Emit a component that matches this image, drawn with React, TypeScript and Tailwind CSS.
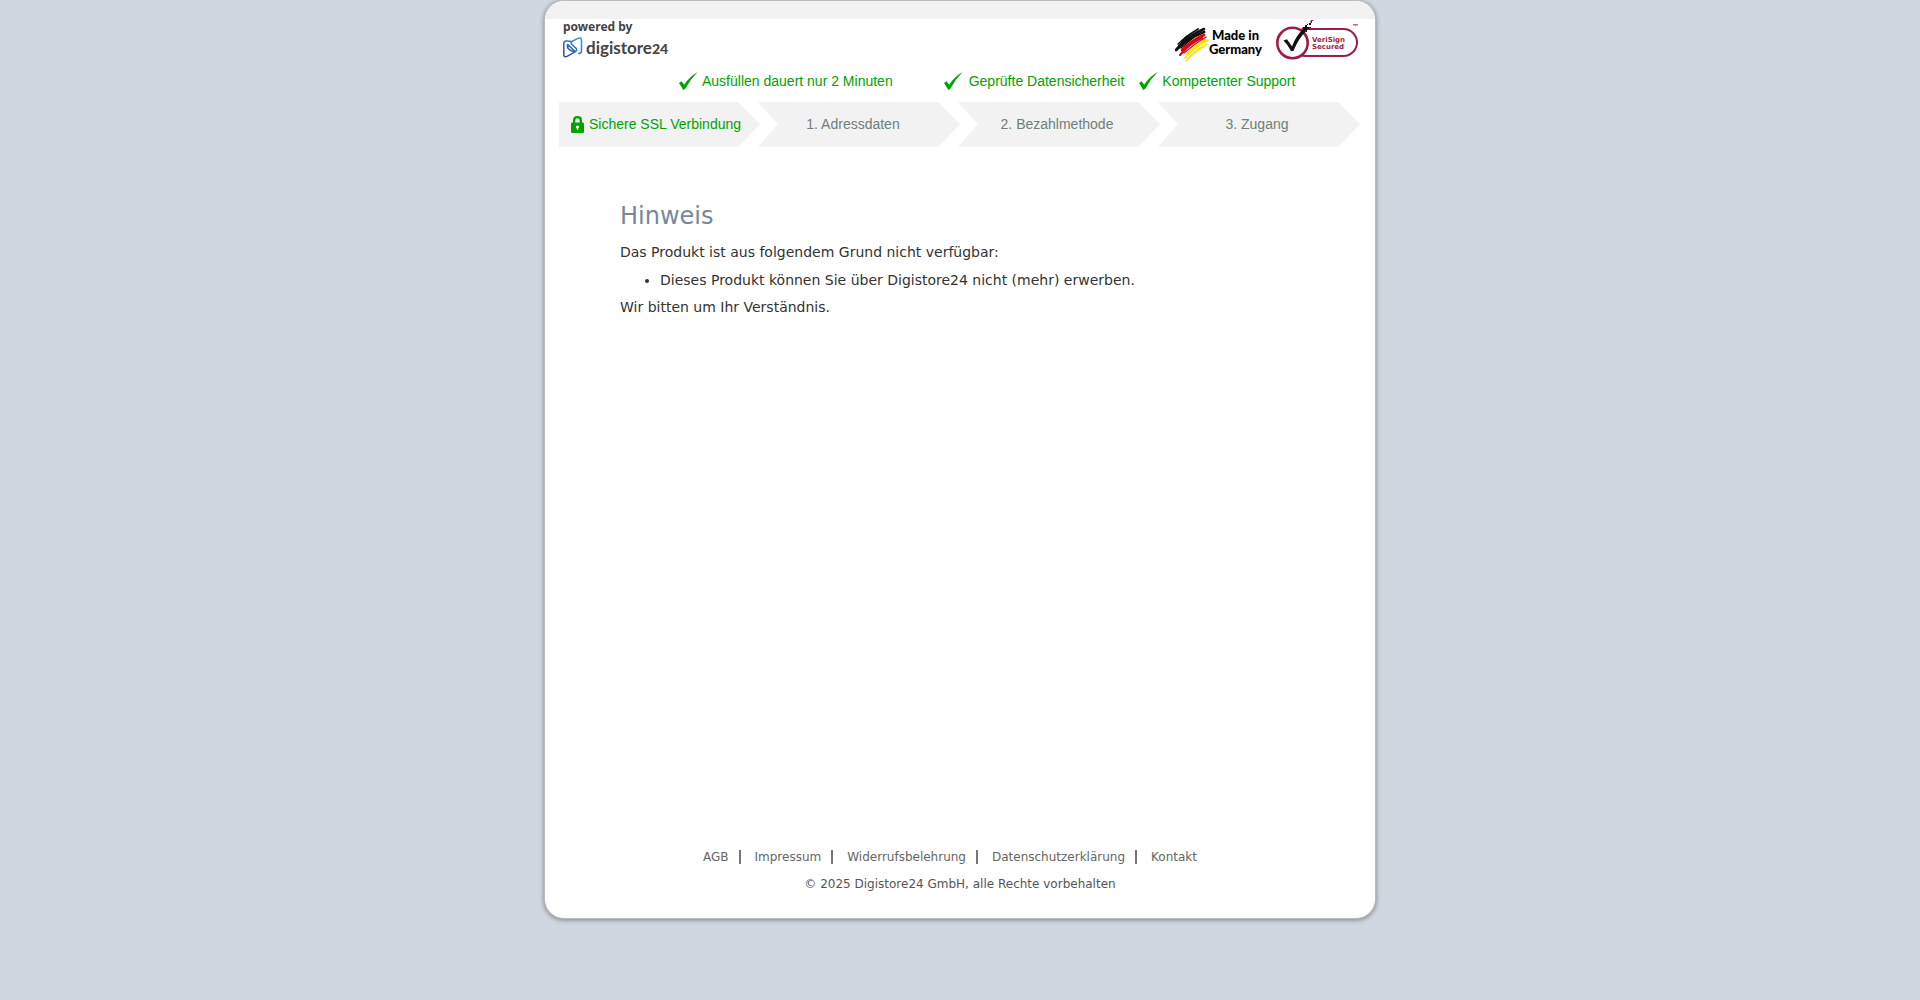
const benefits = [
  { text: "Ausfüllen dauert nur 2 Minuten", className: "ml-[121px] gap-1" },
  { text: "Geprüfte Datensicherheit", className: "ml-[51px] gap-1.5" },
  { text: "Kompetenter Support", className: "ml-[15px] gap-1" },
];

const steps = [
  { text: "1. Adressdaten", className: "pr-3" },
  { text: "2. Bezahlmethode", className: "pr-1" },
  { text: "3. Zugang", className: "pr-1" },
];

const footerLinks = ["AGB", "Impressum", "Widerrufsbelehrung", "Datenschutzerklärung", "Kontakt"];

function CheckIcon() {
  return (
    <svg className="h-[18px] w-[19px] shrink-0" viewBox="0 0 19 18" aria-hidden="true">
      <path d="M0 11 L2.5 9.3 L5.2 12.8 Q10.5 4.5 18.6 0 Q11.5 7 6.5 16.5 L4.3 18 Z" fill="#00a400" />
    </svg>
  );
}

function LockIcon() {
  return (
    <svg className="h-[17px] w-[13px] shrink-0" viewBox="0 0 13 17" aria-hidden="true">
      <path d="M3.1 8 V4.4 Q3.1 1.2 6.5 1.2 Q9.9 1.2 9.9 4.4 V8" fill="none" stroke="#00a400" strokeWidth="2.3" />
      <rect x="0" y="6.6" width="13" height="10.4" rx="1.2" fill="#00a400" />
      <circle cx="6.5" cy="11.1" r="1.6" fill="#f2f2f2" />
      <path d="M5.9 11 H7.1 V14 H5.9 Z" fill="#f2f2f2" />
    </svg>
  );
}

function DigistoreLogo() {
  return (
    <svg className="block h-[22px] w-[110px]" viewBox="0 0 110 22" role="img" aria-label="digistore24">
      <defs>
        <linearGradient id="ds" x1="0" y1="21" x2="19" y2="0" gradientUnits="userSpaceOnUse">
          <stop offset="0" stopColor="#34409c" />
          <stop offset="0.5" stopColor="#2a6fc4" />
          <stop offset="1" stopColor="#2aa5e0" />
        </linearGradient>
      </defs>
      <g fill="none" stroke="url(#ds)" strokeWidth="1.5" strokeLinecap="round" strokeLinejoin="round">
        <path d="M8 4.4 Q5 3.8 3 4 Q0.8 4.2 0.8 6.6 V17.6 Q1 20.8 4 19.4 L12.4 14.6 Q14.6 13 12.8 11 L8.6 7.2 Q7.6 5.4 9.4 4.2 L15 1.4 Q18.4 0 18.5 3.2 V14 Q18.4 16.4 15.8 16.4" />
        <path d="M11.6 14.6 Q8.6 14.6 6 12.4 Q3.8 10.4 4.6 7.4 L11.6 14" />
      </g>
      <text x="23" y="17" fill="#444444" fontFamily="Lato, sans-serif" fontWeight="700" fontSize="17">
        digistore
        <tspan fontSize="14" fontWeight="900">
          24
        </tspan>
      </text>
    </svg>
  );
}

function MadeInGermany() {
  return (
    <svg className="h-[36px] w-[90px]" viewBox="0 0 90 36" role="img" aria-label="Made in Germany">
      <g fill="none" strokeLinecap="round">
        <g stroke="#111111">
          <path d="M7 14 Q14 7 23 2" strokeWidth="1.8" />
          <path d="M4 19 Q13 9 29 2" strokeWidth="2.6" />
          <path d="M1 23 Q13 11 29 5" strokeWidth="2.8" />
          <path d="M3 17 L12 9 M2 21 L8 16 M6 21 L18 11" strokeWidth="1.4" />
        </g>
        <g stroke="#e3000f">
          <path d="M7 23 Q17 13 29 8" strokeWidth="2.6" />
          <path d="M5 28 Q15 16 27 11" strokeWidth="2.2" />
          <path d="M9 26 Q19 17 31 10" strokeWidth="1.2" />
        </g>
        <g stroke="#ffe600">
          <path d="M12 27 Q21 18 30 13" strokeWidth="2.2" />
          <path d="M10 31 Q20 20 33 13" strokeWidth="1.8" />
          <path d="M11 34 Q20 23 32 17" strokeWidth="1.5" />
          <path d="M17 28 L28 20" strokeWidth="1.2" />
        </g>
      </g>
      <g fill="#000000" fontFamily="Lato, sans-serif" fontWeight="900" fontSize="13">
        <text x="37" y="13">Made in</text>
        <text x="34" y="27">Germany</text>
      </g>
    </svg>
  );
}

function VeriSignSeal() {
  return (
    <svg className="h-[42px] w-[84px]" viewBox="0 0 84 42" role="img" aria-label="VeriSign Secured">
      <rect x="16" y="10" width="65" height="27" rx="13.5" fill="#ffffff" stroke="#9f1d42" strokeWidth="2" />
      <circle cx="16.5" cy="24" r="15.2" fill="#ffffff" stroke="#9f1d42" strokeWidth="2.6" />
      <path d="M7.5 21.5 L11 20.3 L16 27.5 Q20 16 29 8.5 L31 11 Q22 20 17.5 32 L15 32 Q12 26 7.5 21.5 Z" fill="#111111" />
      <g fill="#111111">
        <path d="M27 8 h2 v-2 h2 v2 h2 v2 h-2 v2 h-2 v2 h-2 Z" />
        <path d="M31 5 h1 v1 h-1 Z M33 4 h2 v2 h-2 Z M32 8 h3 v1 h-3 Z M30 12 h1 v1 h-1 Z M35 2 h1 v2 h-1 Z M33 10 h1 v1 h-1 Z" />
      </g>
      <path d="M35 4 V1.5 H37.5 M33 8.5 h1 M26 9 h1.5" fill="none" stroke="#9f1d42" />
      <g fill="#9f1d42" fontFamily="DejaVu Sans, sans-serif" fontWeight="700">
        <text x="36" y="23" fontSize="7">VeriSign</text>
        <text x="36" y="30" fontSize="7">Secured</text>
        <text x="76" y="10" fontSize="7">™</text>
      </g>
    </svg>
  );
}

export default function App() {
  return (
    <div className="min-h-screen bg-[#d0d7df] pb-20 font-['DejaVu_Sans',sans-serif] text-sm text-[#333333]">
      <div className="mx-auto w-full max-w-[832px] overflow-hidden rounded-[20px] border border-[#bbbbbb] bg-white shadow-[0_1px_5px_rgba(0,0,0,0.4)]">
        <div className="h-[18px] bg-[#f2f2f2]" />

        <header className="px-[13px] font-['Liberation_Sans',sans-serif]">
          <div className="flex h-[48px] items-start justify-between pr-0.5 pl-[5px]">
            <div>
              <div className="h-[18px] font-['Noto_Sans',sans-serif] text-xs leading-4 font-bold text-[#444444]">
                powered by
              </div>
              <DigistoreLogo />
            </div>
            <div className="flex items-start gap-[11px]">
              <div className="pt-2">
                <MadeInGermany />
              </div>
              <VeriSignSeal />
            </div>
          </div>

          <ul className="flex h-[35px] items-start pt-1 text-[#00a400]">
            {benefits.map((benefit) => (
              <li key={benefit.text} className={`flex items-center whitespace-nowrap ${benefit.className}`}>
                <CheckIcon />
                {benefit.text}
              </li>
            ))}
          </ul>

          <ol className="grid grid-cols-4 pr-1 leading-[45px] text-[#6f7f79]">
            <li className="-mr-0.5 flex items-center gap-[5px] bg-[#f2f2f2] pl-[13px] whitespace-nowrap text-[#00a400] [clip-path:polygon(1px_0,calc(100%-22px)_0,100%_50%,calc(100%-22px)_100%,1px_100%)]">
              <LockIcon />
              Sichere SSL Verbindung
            </li>
            {steps.map((step) => (
              <li
                key={step.text}
                className={`-mr-0.5 bg-[#f2f2f2] text-center [clip-path:polygon(0_0,calc(100%-22px)_0,100%_50%,calc(100%-22px)_100%,0_100%,20px_50%)] ${step.className}`}
              >
                {step.text}
              </li>
            ))}
          </ol>
        </header>

        <main className="min-h-[700px] px-[75px] pt-[53px]">
          <h1 className="mb-2.5 text-2xl leading-8 text-[#778899]">Hinweis</h1>
          <p className="leading-5">Das Produkt ist aus folgendem Grund nicht verfügbar:</p>
          <ul className="mt-2 mb-[7px] list-disc pl-10 leading-5">
            <li>Dieses Produkt können Sie über Digistore24 nicht (mehr) erwerben.</li>
          </ul>
          <p className="leading-5">Wir bitten um Ihr Verständnis.</p>
        </main>

        <footer className="pb-6 text-xs text-[#555555]">
          <nav className="flex items-center justify-center pr-5">
            {footerLinks.map((link, i) => (
              <span key={link} className="flex items-center">
                {i > 0 && <span className="mr-[14px] ml-2.5 h-[14px] w-0.5 bg-[#777777]" />}
                <a href="#" className="leading-5 text-[#666666]">
                  {link}
                </a>
              </span>
            ))}
          </nav>
          <p className="mt-[7px] text-center leading-5">© 2025 Digistore24 GmbH, alle Rechte vorbehalten</p>
        </footer>
      </div>
    </div>
  );
}
